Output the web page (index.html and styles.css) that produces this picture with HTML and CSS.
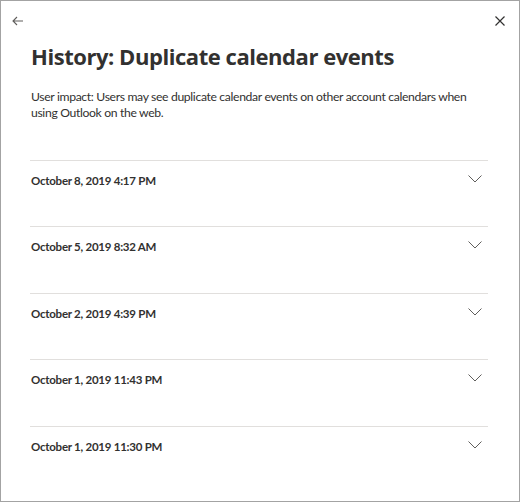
FILE: index.html
```html
<!DOCTYPE html>
<html lang="en">
<head>
<meta charset="utf-8">
<title>History: Duplicate calendar events</title>
<link rel="stylesheet" href="styles.css">
</head>
<body>
<div class="panel">
  <div class="topbar">
    <button class="icon-btn back" aria-label="Back">
      <svg width="12" height="10" viewBox="0 0 12 10"><path d="M11 5H1.5M5 1L1 5l4 4" fill="none" stroke="#605e5c" stroke-width="1.1"/></svg>
    </button>
    <button class="icon-btn close" aria-label="Close">
      <svg width="10" height="10" viewBox="0 0 10 10"><path d="M0.5 0.5l9 9M9.5 0.5l-9 9" fill="none" stroke="#323130" stroke-width="1.2"/></svg>
    </button>
  </div>
  <div class="content">
    <h1 class="title">History: Duplicate calendar events</h1>
    <p class="impact">User impact: Users may see duplicate calendar events on other account calendars when using Outlook on the web.</p>
    <ul class="history">
      <li class="row"><span class="date">October 8, 2019 4:17 PM</span><span class="chev"><svg width="14" height="8" viewBox="0 0 14 8"><path d="M0.5 0.5L7 7l6.5-6.5" fill="none" stroke="#605e5c" stroke-width="1"/></svg></span></li>
      <li class="row"><span class="date">October 5, 2019 8:32 AM</span><span class="chev"><svg width="14" height="8" viewBox="0 0 14 8"><path d="M0.5 0.5L7 7l6.5-6.5" fill="none" stroke="#605e5c" stroke-width="1"/></svg></span></li>
      <li class="row"><span class="date">October 2, 2019 4:39 PM</span><span class="chev"><svg width="14" height="8" viewBox="0 0 14 8"><path d="M0.5 0.5L7 7l6.5-6.5" fill="none" stroke="#605e5c" stroke-width="1"/></svg></span></li>
      <li class="row"><span class="date">October 1, 2019 11:43 PM</span><span class="chev"><svg width="14" height="8" viewBox="0 0 14 8"><path d="M0.5 0.5L7 7l6.5-6.5" fill="none" stroke="#605e5c" stroke-width="1"/></svg></span></li>
      <li class="row"><span class="date">October 1, 2019 11:30 PM</span><span class="chev"><svg width="14" height="8" viewBox="0 0 14 8"><path d="M0.5 0.5L7 7l6.5-6.5" fill="none" stroke="#605e5c" stroke-width="1"/></svg></span></li>
    </ul>
  </div>
</div>
</body>
</html>
```

FILE: styles.css
```css
* { box-sizing: border-box; }
html, body { margin: 0; padding: 0; background: #fff; }
body { font-family: "Lato", "Open Sans", sans-serif; color: #323130; }
.panel {
  width: 520px;
  height: 502px;
  border: 1px solid #a3a3a3;
  background: #fff;
  overflow: hidden;
}
.topbar {
  display: flex;
  justify-content: space-between;
  align-items: center;
  padding: 10px 13px 0 11px;
  height: 30px;
}
.icon-btn {
  background: none;
  border: 0;
  padding: 0;
  display: flex;
  align-items: center;
  justify-content: center;
  width: 12px;
  height: 12px;
}
.content { padding: 0 31px 0 29px; }
.title {
  margin: 10px 0 0 1px;
  font-family: "Open Sans", "Noto Sans", sans-serif;
  font-size: 22px;
  font-weight: 700;
  line-height: 30px;
  letter-spacing: -0.45px;
  color: #323130;
}
.impact {
  margin: 18px 0 0 1px;
  font-size: 12.2px;
  line-height: 16px;
  letter-spacing: -0.35px;
  color: #323130;
}
.history {
  list-style: none;
  margin: 39px 0 0 0;
  padding: 0;
}
.row {
  display: flex;
  justify-content: space-between;
  align-items: flex-start;
  height: 66.4px;
  border-top: 1px solid #e1dfdd;
  padding: 12px 6px 0 1px;
}
.date {
  font-size: 11.5px;
  font-weight: 700;
  line-height: 15px;
  letter-spacing: -0.25px;
}
.chev { display: flex; padding-top: 2px; }
```
